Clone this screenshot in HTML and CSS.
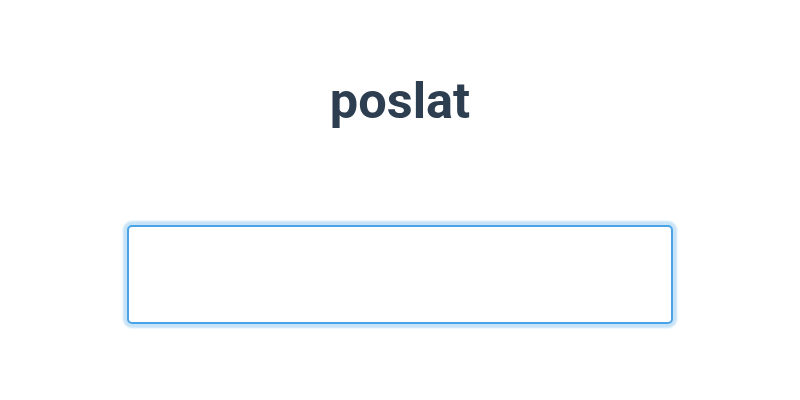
FILE: index.html
```html
<!DOCTYPE html>
<html lang="cs">
<head>
<meta charset="utf-8">
<title>poslat</title>
<link rel="stylesheet" href="styles.css">
</head>
<body>
<main class="page">
  <h1 class="title">poslat</h1>
  <input class="field" type="text" aria-label="poslat">
</main>
</body>
</html>
```
FILE: styles.css
```css
html, body {
  margin: 0;
  padding: 0;
  background: #ffffff;
}
.page {
  display: flex;
  flex-direction: column;
  align-items: center;
  padding-top: 70px;
  padding-bottom: 20px;
  font-family: Roboto, "Liberation Sans", sans-serif;
}
.title {
  margin: 0;
  font-size: 50.5px;
  line-height: 61px;
  font-weight: 700;
  color: #2c3e50;
}
.field {
  margin-top: 94px;
  width: 546px;
  height: 99px;
  box-sizing: border-box;
  border: 2px solid #4aa3e6;
  border-radius: 5px;
  box-shadow: 0 0 2px 4px #c6e3f8;
  outline: none;
  background: #ffffff;
  font-family: inherit;
  font-size: 20px;
}
```
